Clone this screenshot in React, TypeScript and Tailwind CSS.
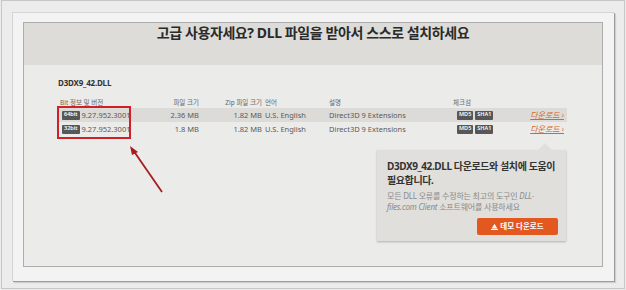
import React from "react";

type Row = { bit: string; version: string; size: string; zip: string; lang: string; desc: string; shade: boolean };

const rows: Row[] = [
  { bit: "64bit", version: "9.27.952.3001", size: "2.36 MB", zip: "1.82 MB", lang: "U.S. English", desc: "Direct3D 9 Extensions", shade: true },
  { bit: "32bit", version: "9.27.952.3001", size: "1.8 MB", zip: "1.82 MB", lang: "U.S. English", desc: "Direct3D 9 Extensions", shade: false },
];

const cols = "grid grid-cols-[108px_35px_62px_66px_124px_67px_47px] w-[509px] items-center";

function Badge({ children }: { children: React.ReactNode }) {
  return (
    <span className="inline-flex items-center h-[9px] px-[2px] rounded-[1px] bg-[#575757] text-white text-[5.5px] leading-none font-semibold">
      {children}
    </span>
  );
}

export default function App() {
  return (
    <div className="relative w-[626px] h-[290px] bg-[#ececec] overflow-hidden font-['Noto_Sans','Noto_Sans_CJK_KR',sans-serif]">
      {/* frames */}
      <div className="ml-[1px] w-[624px] h-[289px] border border-[#c6c6c6] pl-[10px] pt-[11px] pr-[10px] pb-[7px]">
        <div className="h-full border-l border-t border-[#d4d4d4] bg-[#f3f3f3] shadow-[1px_1px_0_#9c9c9c,2px_2px_1px_#cfcfcf] pl-[10px] pt-[9px] pr-[11px] pb-[14px]">
          <div className="h-full border border-[#adadad] bg-[#ebebea] flex flex-col">
            {/* header */}
            <div className="h-[42px] bg-[#dddcd8] flex justify-center pt-[1px]">
              <h1 className="text-[14px] leading-[18px] font-bold tracking-[-0.4px] text-[#2a2a2a]">
                고급 사용자세요? DLL 파일을 받아서 스스로 설치하세요
              </h1>
            </div>

            {/* body */}
            <div className="pl-[34px] pt-[13px]">
              <div className="text-[8px] leading-[10px] font-bold text-[#333] tracking-[-0.2px]">D3DX9_42.DLL</div>

              <div className={`${cols} mt-[10px] h-[10px] text-[6.5px] leading-[10px] text-[#666]`}>
                <div className="pl-[2px]">Bit 정보 및 버전</div>
                <div className="text-right pr-[2px]">파일 크기</div>
                <div className="text-right pr-[1px]">Zip 파일 크기</div>
                <div className="pl-[2px]">언어</div>
                <div>설명</div>
                <div>체크섬</div>
                <div />
              </div>

              {rows.map((r) => (
                <div
                  key={r.bit}
                  className={`${cols} h-[14px] text-[7.5px] leading-[14px] text-[#5a5a5a] ${r.shade ? "bg-[#dcdbd7]" : "bg-[#ebebea]"}`}
                >
                  <div className="flex items-center gap-[2px] pl-[4px]">
                    <Badge>{r.bit}</Badge>
                    <span>{r.version}</span>
                  </div>
                  <div className="text-right pr-[2px]">{r.size}</div>
                  <div className="text-right pr-[1px]">{r.zip}</div>
                  <div className="pl-[2px]">{r.lang}</div>
                  <div>{r.desc}</div>
                  <div className="flex items-center gap-[2px] pl-[4px]">
                    <Badge>MD5</Badge>
                    <Badge>SHA1</Badge>
                  </div>
                  <div className="text-right pr-[3px] italic underline text-[#d4692f] text-[8px]">다운로드 ›</div>
                </div>
              ))}
            </div>
          </div>
        </div>
      </div>

      {/* highlight annotation */}
      <div className="absolute left-[57px] top-[106px] w-[74px] h-[33px] border-2 border-[#cf2129]" />
      <svg className="absolute left-0 top-0" width="626" height="290" viewBox="0 0 626 290">
        <line x1="162" y1="192" x2="133" y2="150" stroke="#a51d1f" strokeWidth="1.8" />
        <polygon points="130,146 138,152 132,155" fill="#a51d1f" />
      </svg>

      {/* help popover */}
      <div className="absolute left-[377px] top-[150px] w-[189px] h-[91px] bg-[#e0dfdb] shadow-[0_1px_2px_rgba(0,0,0,0.25)] pl-[10px] pr-[8px] pt-[9px]">
        <div className="absolute right-[14px] -top-[7px] w-0 h-0 border-l-[7px] border-r-[7px] border-b-[7px] border-l-transparent border-r-transparent border-b-[#e0dfdb]" />
        <p className="text-[10px] leading-[14px] font-bold text-[#333] tracking-[-0.4px]">
          D3DX9_42.DLL 다운로드와 설치에 도움이 필요합니다.
        </p>
        <p className="mt-[3px] text-[8px] leading-[11px] text-[#8a8a8a] tracking-[-0.2px] whitespace-nowrap">
          모든 DLL 오류를 수정하는 최고의 도구인 <i>DLL-</i>
          <br />
          <i>files.com Client</i> 소프트웨어를 사용하세요
        </p>
        <div className="flex justify-end mt-[6px]">
          <button className="flex items-center justify-center gap-[2px] w-[81px] h-[17px] rounded-[2px] bg-[#e2581e] text-white text-[7.5px] font-bold leading-none">
            <svg width="7" height="7" viewBox="0 0 10 10" fill="white">
              <polygon points="5,1 9,8 1,8" />
              <rect x="0" y="8.5" width="10" height="1.5" />
            </svg>
            데모 다운로드
          </button>
        </div>
      </div>
    </div>
  );
}
